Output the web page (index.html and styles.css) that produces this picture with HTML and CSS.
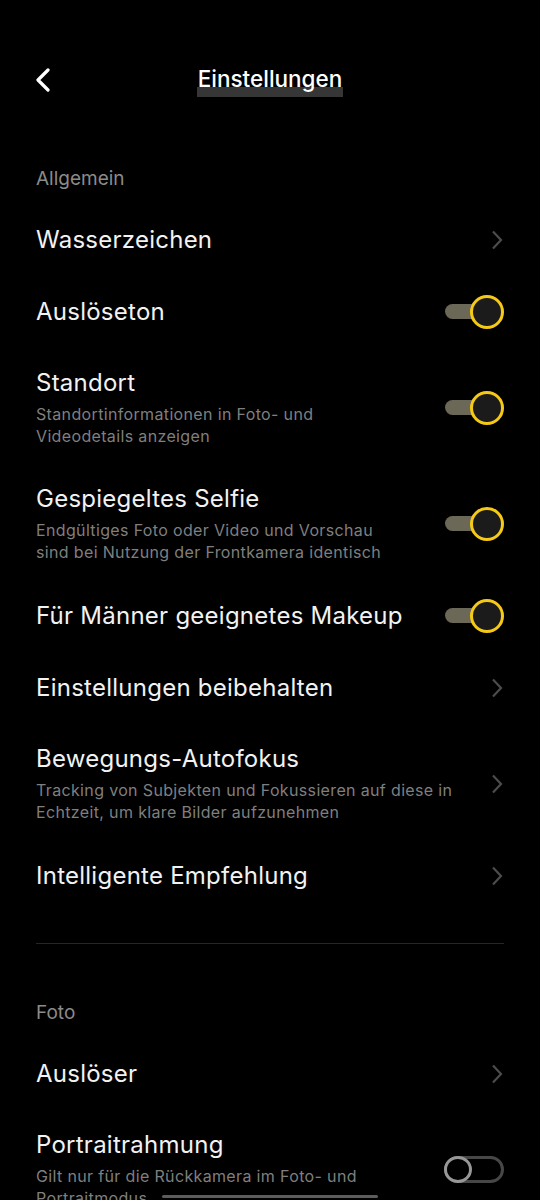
FILE: index.html
```html
<!DOCTYPE html>
<html lang="de">
<head>
    <meta charset="UTF-8">
    <meta name="viewport" content="width=device-width, initial-scale=1.0">
    <title>Einstellungen</title>
    <link rel="stylesheet" href="styles.css">
</head>
<body>
    <div class="screen">
        <div class="topbar">
            <svg class="back" width="16" height="24" viewBox="0 0 16 24"><polyline points="13,2 3,12 13,22" fill="none" stroke="#fff" stroke-width="3.2" stroke-linecap="round" stroke-linejoin="round"/></svg>
            <h1 class="page-title"><span>Einstellungen</span></h1>
        </div>

        <div class="section-label">Allgemein</div>

        <div class="row">
            <div class="row-text"><div class="row-title">Wasserzeichen</div></div>
            <svg class="chevron" width="12" height="20" viewBox="0 0 12 20"><polyline points="2,1.5 10,10 2,18.5" fill="none" stroke="#4c4c4c" stroke-width="2.2"/></svg>
        </div>
        <div class="row">
            <div class="row-text"><div class="row-title">Auslöseton</div></div>
            <div class="switch on"><span class="track"></span><span class="knob"></span></div>
        </div>
        <div class="row tall">
            <div class="row-text">
                <div class="row-title">Standort</div>
                <div class="row-sub">Standortinformationen in Foto- und<br>Videodetails anzeigen</div>
            </div>
            <div class="switch on"><span class="track"></span><span class="knob"></span></div>
        </div>
        <div class="row tall">
            <div class="row-text">
                <div class="row-title">Gespiegeltes Selfie</div>
                <div class="row-sub">Endgültiges Foto oder Video und Vorschau<br>sind bei Nutzung der Frontkamera identisch</div>
            </div>
            <div class="switch on"><span class="track"></span><span class="knob"></span></div>
        </div>
        <div class="row">
            <div class="row-text"><div class="row-title">Für Männer geeignetes Makeup</div></div>
            <div class="switch on"><span class="track"></span><span class="knob"></span></div>
        </div>
        <div class="row">
            <div class="row-text"><div class="row-title">Einstellungen beibehalten</div></div>
            <svg class="chevron" width="12" height="20" viewBox="0 0 12 20"><polyline points="2,1.5 10,10 2,18.5" fill="none" stroke="#4c4c4c" stroke-width="2.2"/></svg>
        </div>
        <div class="row tall">
            <div class="row-text">
                <div class="row-title">Bewegungs-Autofokus</div>
                <div class="row-sub">Tracking von Subjekten und Fokussieren auf diese in<br>Echtzeit, um klare Bilder aufzunehmen</div>
            </div>
            <svg class="chevron" width="12" height="20" viewBox="0 0 12 20"><polyline points="2,1.5 10,10 2,18.5" fill="none" stroke="#4c4c4c" stroke-width="2.2"/></svg>
        </div>
        <div class="row">
            <div class="row-text"><div class="row-title">Intelligente Empfehlung</div></div>
            <svg class="chevron" width="12" height="20" viewBox="0 0 12 20"><polyline points="2,1.5 10,10 2,18.5" fill="none" stroke="#4c4c4c" stroke-width="2.2"/></svg>
        </div>

        <div class="divider"></div>

        <div class="section-label">Foto</div>

        <div class="row">
            <div class="row-text"><div class="row-title">Auslöser</div></div>
            <svg class="chevron" width="12" height="20" viewBox="0 0 12 20"><polyline points="2,1.5 10,10 2,18.5" fill="none" stroke="#4c4c4c" stroke-width="2.2"/></svg>
        </div>
        <div class="row tall">
            <div class="row-text">
                <div class="row-title">Portraitrahmung</div>
                <div class="row-sub">Gilt nur für die Rückkamera im Foto- und<br>Portraitmodus</div>
            </div>
            <div class="switch off"><span class="knob"></span></div>
        </div>

        <div class="home-bar"></div>
    </div>
</body>
</html>
```

FILE: styles.css
```css
body { margin: 0; background: #000; font-family: Inter, "Noto Sans", sans-serif; color: #f2f2f2; }
.screen { width: 540px; height: 1200px; overflow: hidden; position: relative; padding: 0 36px; box-sizing: border-box; }

/* top bar */
.topbar { display: flex; align-items: center; height: 48px; margin-top: 56px; }
.back { margin-left: -1px; }
.page-title { flex: 1; margin: 0 0 0 -15px; text-align: center; font-size: 22.5px; font-weight: 500; line-height: 30px; }
.page-title span {
    display: inline-block; padding: 0 1px 3px; color: #fff;
    background: linear-gradient(to bottom, transparent 0 23px, #363636 23px);
}

.section-label { font-size: 19px; line-height: 24px; color: #8b8b8b; margin: 63px 0 13px; }
.divider + .section-label { margin-top: 57px; }

/* rows */
.row { display: flex; align-items: center; justify-content: space-between; min-height: 72px; }
.row.tall { padding: 20px 0 17px; box-sizing: border-box; }
.row-text { flex: 1; min-width: 0; }
.row-title { font-size: 24px; line-height: 30px; letter-spacing: 0.25px; color: #f2f2f2; }
.row-sub { font-size: 16px; line-height: 22px; letter-spacing: 0.35px; color: #7f7f7f; margin-top: 5px; }
.chevron { flex: none; margin-right: 1px; }

/* switches */
.switch { flex: none; position: relative; width: 59px; height: 34px; }
.switch.on .track { position: absolute; left: 0; top: 9px; width: 52px; height: 15px; border-radius: 8px; background: #6b6857; }
.switch.on .knob {
    position: absolute; right: 0; top: 0; width: 34px; height: 34px; box-sizing: border-box;
    border-radius: 50%; border: 3.5px solid #f6c917; background: #1b1b1b;
}
.switch.off { width: 60px; height: 27px; box-sizing: border-box; border: 3px solid #474747; border-radius: 14px; }
.switch.off .knob {
    position: absolute; left: -3px; top: -3px; width: 28px; height: 27px; box-sizing: border-box;
    border-radius: 50%; border: 3px solid #979797; background: #000;
}

.divider { height: 1px; background: #262626; margin-top: 31px; }

.home-bar { position: absolute; left: 162px; bottom: 2px; width: 216px; height: 3px; border-radius: 2px; background: #5c5c5c; }
```
